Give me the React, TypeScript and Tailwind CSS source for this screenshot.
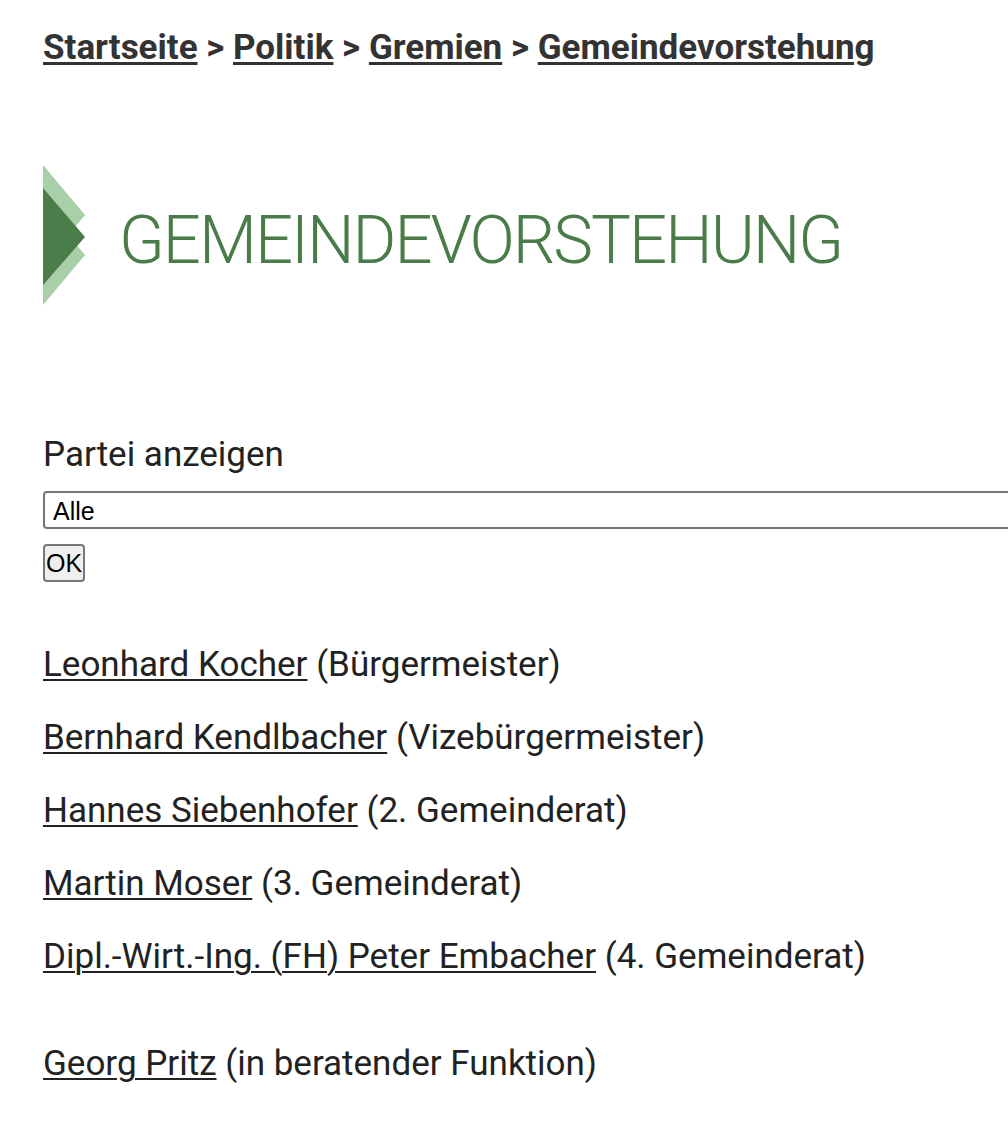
import React from "react";

const people = [
  { name: "Leonhard Kocher", role: "(Bürgermeister)" },
  { name: "Bernhard Kendlbacher", role: "(Vizebürgermeister)" },
  { name: "Hannes Siebenhofer", role: "(2. Gemeinderat)" },
  { name: "Martin Moser", role: "(3. Gemeinderat)" },
  { name: "Dipl.-Wirt.-Ing. (FH) Peter Embacher", role: "(4. Gemeinderat)" },
];

export default function App() {
  return (
    <div
      className="min-h-[1142px] w-[1008px] overflow-hidden bg-white text-[#222]"
      style={{ fontFamily: "Roboto, 'Liberation Sans', sans-serif" }}
    >
      <div className="pl-[43px] pt-[28px]">
        <nav className="whitespace-nowrap text-[35px] font-bold leading-[40px] text-[#333]">
          <a href="#" className="underline decoration-[3px] underline-offset-[3px]">Startseite</a>
          <span> &gt; </span>
          <a href="#" className="underline decoration-[3px] underline-offset-[3px]">Politik</a>
          <span> &gt; </span>
          <a href="#" className="underline decoration-[3px] underline-offset-[3px]">Gremien</a>
          <span> &gt; </span>
          <a href="#" className="underline decoration-[3px] underline-offset-[3px]">Gemeindevorstehung</a>
        </nav>

        <div className="mt-[97px] flex items-center">
          <svg width="43" height="141" viewBox="0 0 43 141" className="shrink-0">
            <polygon points="0,0 42,50 0,100" fill="#a9cfa9" />
            <polygon points="0,40 42,90 0,140" fill="#a9cfa9" />
            <polygon points="0,23 42,72 0,120" fill="#4b7d4b" />
          </svg>
          <h1 className="ml-[33px] mt-[10px] whitespace-nowrap text-[67px] font-light leading-none tracking-[-2px] text-[#4a7c4a]">
            GEMEINDEVORSTEHUNG
          </h1>
        </div>

        <div className="mt-[129px]">
          <label className="block text-[35px] leading-[40px] text-[#222]">Partei anzeigen</label>
          <div className="mt-[16px]">
            <select
              className="block h-[38px] w-[1000px] appearance-none rounded-[4px] border-2 border-[#767676] bg-white px-[8px] text-[25px] text-black"
              style={{ fontFamily: "'Liberation Sans', Arial, sans-serif" }}
              defaultValue="Alle"
            >
              <option>Alle</option>
            </select>
          </div>
          <button
            className="mt-[15px] block h-[38px] rounded-[4px] border-2 border-[#767676] bg-[#efefef] px-[1px] text-[25px] leading-none text-black"
            style={{ fontFamily: "'Liberation Sans', Arial, sans-serif" }}
          >
            OK
          </button>
        </div>

        <div className="mt-[63px] text-[35px] leading-[40px]">
          {people.map((p) => (
            <p key={p.name} className="mb-[33px] whitespace-nowrap">
              <a href="#" className="underline decoration-2 underline-offset-[3px]">{p.name}</a> {p.role}
            </p>
          ))}
          <p className="mt-[67px] whitespace-nowrap">
            <a href="#" className="underline decoration-2 underline-offset-[3px]">Georg Pritz</a> (in beratender Funktion)
          </p>
        </div>
      </div>
    </div>
  );
}
